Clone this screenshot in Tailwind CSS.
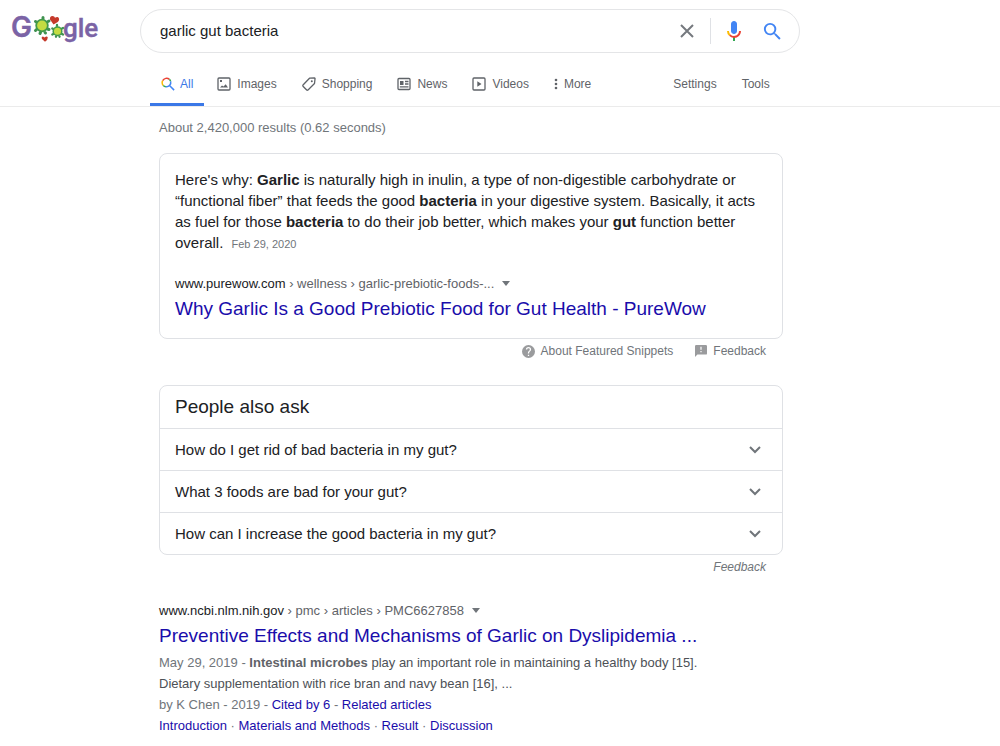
<!DOCTYPE html>
<html lang="en">
<head>
    <meta charset="UTF-8">
    <meta name="viewport" content="width=device-width, initial-scale=1.0">
    <title>garlic gut bacteria - Google Search</title>
    <script src="https://cdn.jsdelivr.net/npm/@tailwindcss/browser@4"></script>
</head>
<body class="bg-white text-[#202124] font-['Liberation_Sans',Arial,sans-serif] text-[13px] overflow-x-hidden">
    <!-- Header -->
    <header class="border-b border-[#ebebeb]">
        <div class="flex pt-[9px]">
            <a href="#" aria-label="Google" class="w-[140px] shrink-0 pl-[10px]">
                <svg class="w-[90px] h-[40px]" viewBox="0 0 90 40">
                    <g fill="#7b63a5" stroke="#7b63a5" stroke-width="0.4">
                        <text x="1" y="28" font-size="28" font-weight="600" font-family="Inter, sans-serif">G</text>
                        <text x="53" y="28" font-size="26" font-weight="500" font-family="Roboto, sans-serif">gle</text>
                    </g>
                    <!-- Turtles -->
                    <g stroke="#3f9150" stroke-width="3" stroke-linecap="round">
                        <path d="M33 9.500v-1M26.500 13l-1-.5M38 12.500l1-.5M26.500 20.500l-1 1M37.500 20l1.500.5M30.500 23.500l-.5 1M35 23.500l.5.5"/>
                        <path stroke-width="2.300" d="M47 17v-1M43.300 20l-1-.5M52 19.500l1-.5M43.300 25l-1 .5M52 25l1 .5M46 27.300v.5M49.500 27.300v.5"/>
                    </g>
                    <circle cx="32" cy="16.500" r="5.800" fill="#c4dc42" stroke="#439a4c" stroke-width="1.800"/>
                    <circle cx="47.500" cy="22.200" r="4.300" fill="#c4dc42" stroke="#439a4c" stroke-width="1.500"/>
                    <g fill="#c5392b">
                        <path d="M43.500 15.500 L40 10.500 Q39.500 7 42.500 7 Q44.500 7 45 8.800 Q48 7 49 9.500 Q49.500 12.500 46.500 13.800Z"/>
                        <path d="M35 32.800 L32 30 Q31 27.500 33 27.500 L34.500 28.500 Q37 26.500 37.800 28.500 Q38 30.500 35 32.800Z"/>
                    </g>
                </svg>
            </a>
            <form class="flex items-center flex-1 max-w-[660px] h-[44px] mr-4 pl-[19px] pr-[15px] border border-[#e4e5e7] rounded-full" onsubmit="return false">
                <input type="text" name="q" aria-label="Search" value="garlic gut bacteria" class="flex-1 min-w-0 text-[15px] outline-none">
                <button type="button" aria-label="Clear" class="w-6 h-6 mr-[11px]">
                    <svg class="w-6 h-6" viewBox="0 0 24 24" fill="none" stroke="#75797e" stroke-width="2"><path d="M6 6l12 12M18 6L6 18"/></svg>
                </button>
                <span class="w-px h-[26px] bg-[#dfe1e5]"></span>
                <button type="button" aria-label="Search by voice" class="w-6 h-6 ml-[11px]">
                    <svg class="w-6 h-6" viewBox="0 0 24 24">
                        <path fill="#4285f4" d="M12 15c1.660 0 3-1.310 3-2.970V5.010C15 3.340 13.660 2 12 2S9 3.340 9 5.010v7.020C9 13.690 10.340 15 12 15z"/>
                        <path fill="#34a853" d="M11 18.080h2V22h-2z"/>
                        <path fill="#fbbc05" d="M7.050 16.870A6.700 6.700 0 0 1 5 12h2c0 1.450.560 2.420 1.470 3.380z"/>
                        <path fill="#ea4335" d="M12 16.930a4.970 4.970 0 0 1-3.540-1.550l-1.410 1.490A6.990 6.990 0 0 0 12 19c3.870 0 6.990-2.920 6.990-7h-1.990c0 2.920-2.240 4.930-5 4.930z"/>
                    </svg>
                </button>
                <button type="submit" aria-label="Google Search" class="w-[23px] h-[23px] ml-[15px]">
                    <svg class="w-[23px] h-[23px]" viewBox="0 0 24 24" fill="#4285f4"><path d="M15.500 14h-.790l-.280-.270A6.470 6.470 0 0 0 16 9.500 6.500 6.500 0 1 0 9.500 16c1.610 0 3.090-.590 4.230-1.570l.270.280v.790l5 4.990L20.490 19l-4.990-5zm-6 0a4.500 4.500 0 1 1 0-9 4.500 4.500 0 0 1 0 9z"/></svg>
                </button>
            </form>
        </div>

        <!-- Tabs -->
        <div class="flex pl-[150px] mt-[9px] text-[12px] text-[#5f6368]">
            <nav class="flex gap-[25px]">
                <a href="#" class="flex items-center h-11 pt-[3px] px-[11px] -mr-3 gap-[5px] border-b-3 border-[#3b78e7] text-[#3b78e7]">
                    <svg class="w-[14px] h-[14px]" viewBox="0 0 16 16" fill="none" stroke-width="1.700">
                        <path stroke="#ea4335" d="M1.900 4.200A5 5 0 0 1 9.600 2.700"/>
                        <path stroke="#fbbc05" d="M1.900 4.200A5 5 0 0 0 2.600 9.700"/>
                        <path stroke="#34a853" d="M9.600 2.700A5 5 0 0 1 11 5M2.600 9.700a5 5 0 0 0 3 1.500"/>
                        <path stroke="#4285f4" d="M11 5A5 5 0 0 1 5.600 11.200M9.700 9.700l5.300 5.300"/>
                    </svg>
                    All
                </a>
                <a href="#" class="flex items-center h-11 pt-[3px] gap-[6px] border-b-3 border-transparent">
                    <svg class="w-[14px] h-[14px]" viewBox="0 0 14 14" fill="none" stroke="currentColor" stroke-width="1.300"><rect x="1" y="1" width="12" height="12" rx="1"/><path fill="currentColor" stroke="none" d="M3 10.500l2-2 1.500 1 2.200-2.200 2.300 3.200zM3 3h2v2H3z"/></svg>
                    Images
                </a>
                <a href="#" class="flex items-center h-11 pt-[3px] gap-[6px] border-b-3 border-transparent">
                    <svg class="w-[14px] h-[14px]" viewBox="0 0 14 14" fill="none" stroke="currentColor" stroke-width="1.300" stroke-linejoin="round"><path d="M7.500 1.200L12.500 1Q13.200 1 13 2L12.500 6.500 6 13Q5.300 13.500 4.700 13L1 9.200Q.600 8.600 1 8z"/><circle cx="9.800" cy="4.200" r="1" fill="currentColor" stroke="none"/></svg>
                    Shopping
                </a>
                <a href="#" class="flex items-center h-11 pt-[3px] gap-[6px] border-b-3 border-transparent">
                    <svg class="w-[14px] h-[14px]" viewBox="0 0 14 14" fill="none" stroke="currentColor" stroke-width="1.300"><rect x="1" y="1.500" width="12" height="11" rx="1"/><path d="M8 4.500h3.500M8 7h3.500M2.800 9.800h8.700"/><path fill="currentColor" stroke="none" d="M3 4h3.500v4H3z"/></svg>
                    News
                </a>
                <a href="#" class="flex items-center h-11 pt-[3px] gap-[6px] border-b-3 border-transparent">
                    <svg class="w-[14px] h-[14px]" viewBox="0 0 14 14" fill="none" stroke="currentColor" stroke-width="1.300"><rect x="1" y="1" width="12" height="12" rx="1"/><path fill="currentColor" stroke="none" d="M5.300 4.200v5.600L9.500 7z"/></svg>
                    Videos
                </a>
                <a href="#" class="flex items-center h-11 pt-[3px] gap-[6px] border-b-3 border-transparent">
                    <svg class="w-[4px] h-[12px]" viewBox="0 0 4 12" fill="currentColor"><circle cx="2" cy="2" r="1.300"/><circle cx="2" cy="6" r="1.300"/><circle cx="2" cy="10" r="1.300"/></svg>
                    More
                </a>
            </nav>
            <div class="flex items-center h-11 pt-[3px] ml-[82px] gap-[25px] border-b-3 border-transparent">
                <a href="#">Settings</a>
                <a href="#">Tools</a>
            </div>
        </div>
    </header>

    <main class="ml-[159px] mr-4 max-w-[624px]">
        <p class="mt-[10px] leading-[21px] text-[#70757a]">About 2,420,000 results (0.62 seconds)</p>

        <!-- Featured snippet -->
        <section class="mt-[15px] px-[15px] pt-[15px] pb-[16px] border border-[#dfe1e5] rounded-lg">
            <p class="text-[15px] leading-[21px]">Here's why: <b>Garlic</b> is naturally high in inulin, a type of non-digestible carbohydrate or “functional fiber” that feeds the good <b>bacteria</b> in your digestive system. Basically, it acts as fuel for those <b>bacteria</b> to do their job better, which makes your <b>gut</b> function better overall. <span class="ml-1 text-[11px] text-[#70757a]">Feb 29, 2020</span></p>
            <div class="flex items-center mt-[18px] leading-[21px] text-[#5f6368]">
                <cite class="not-italic"><span class="text-[#202124]">www.purewow.com</span> › wellness › garlic-prebiotic-foods-...</cite>
                <button type="button" aria-label="More about this result" class="ml-2"><svg class="w-2 h-[5px]" viewBox="0 0 8 5" fill="#70757a"><path d="M0 0h8L4 5z"/></svg></button>
            </div>
            <h3 class="mt-[2px] text-[19px] leading-[26px] text-[#1a0dab]"><a href="#">Why Garlic Is a Good Prebiotic Food for Gut Health - PureWow</a></h3>
        </section>
        <div class="flex justify-end items-center gap-[22px] pr-[17px] pt-[3px] leading-[18px] text-[12px] text-[#70757a]">
            <a href="#" class="flex items-center gap-[6px]">
                <svg class="w-[13px] h-[13px]" viewBox="2 2 20 20" fill="#9a9b9d"><path d="M12 2a10 10 0 1 0 0 20 10 10 0 0 0 0-20zm1 17h-2v-2h2v2zm2.070-7.750l-.900.920C13.450 12.900 13 13.500 13 15h-2v-.500c0-1.100.450-2.100 1.170-2.830l1.240-1.260c.370-.360.590-.860.590-1.410a2 2 0 1 0-4 0H8a4 4 0 1 1 8 0c0 .880-.360 1.680-.930 2.250z"/></svg>
                About Featured Snippets
            </a>
            <a href="#" class="flex items-center gap-[6px]">
                <svg class="w-[12px] h-[12px]" viewBox="2 2 20 20" fill="#9a9b9d"><path d="M20 2H4a2 2 0 0 0-2 2v18l4-4h14a2 2 0 0 0 2-2V4a2 2 0 0 0-2-2zm-7 12h-2v-2h2v2zm0-4h-2V5h2v5z"/></svg>
                Feedback
            </a>
        </div>

        <!-- People also ask -->
        <section class="mt-[25px] border border-[#dfe1e5] rounded-lg divide-y divide-[#dfe1e5] text-[15px]">
            <h2 class="px-[15px] text-[19px] leading-[42px]">People also ask</h2>
            <button type="button" class="flex w-full items-center justify-between pl-[15px] pr-[21px] leading-[41px] text-left">
                How do I get rid of bad bacteria in my gut?
                <svg class="w-3 h-2" viewBox="0 0 12 8" fill="none" stroke="#70757a" stroke-width="2"><path d="M1 1l5 5 5-5"/></svg>
            </button>
            <button type="button" class="flex w-full items-center justify-between pl-[15px] pr-[21px] leading-[41px] text-left">
                What 3 foods are bad for your gut?
                <svg class="w-3 h-2" viewBox="0 0 12 8" fill="none" stroke="#70757a" stroke-width="2"><path d="M1 1l5 5 5-5"/></svg>
            </button>
            <button type="button" class="flex w-full items-center justify-between pl-[15px] pr-[21px] leading-[41px] text-left">
                How can I increase the good bacteria in my gut?
                <svg class="w-3 h-2" viewBox="0 0 12 8" fill="none" stroke="#70757a" stroke-width="2"><path d="M1 1l5 5 5-5"/></svg>
            </button>
        </section>
        <div class="pr-[17px] pt-[3px] text-right leading-[18px] text-[12px] italic text-[#70757a]"><a href="#">Feedback</a></div>

        <!-- Result -->
        <article class="mt-[24px] leading-[21px] text-[#4d5156]">
            <div class="flex items-center text-[#5f6368]">
                <cite class="not-italic"><span class="text-[#202124]">www.ncbi.nlm.nih.gov</span> › pmc › articles › PMC6627858</cite>
                <button type="button" aria-label="More about this result" class="ml-2"><svg class="w-2 h-[5px]" viewBox="0 0 8 5" fill="#70757a"><path d="M0 0h8L4 5z"/></svg></button>
            </div>
            <h3 class="mt-[2px] mb-[3px] text-[19px] leading-[26px] text-[#1a0dab]"><a href="#">Preventive Effects and Mechanisms of Garlic on Dyslipidemia ...</a></h3>
            <p><span class="text-[#70757a]">May 29, 2019 - </span><b class="text-[#5f6368]">Intestinal microbes</b> play an important role in maintaining a healthy body [15].<br>Dietary supplementation with rice bran and navy bean [16], ...</p>
            <p class="text-[#70757a]">by K Chen - 2019 - <a href="#" class="text-[#1a0dab]">Cited by 6</a> - <a href="#" class="text-[#1a0dab]">Related articles</a></p>
            <p class="text-[#70757a]"><a href="#" class="text-[#1a0dab]">Introduction</a> · <a href="#" class="text-[#1a0dab]">Materials and Methods</a> · <a href="#" class="text-[#1a0dab]">Result</a> · <a href="#" class="text-[#1a0dab]">Discussion</a></p>
        </article>
    </main>
</body>
</html>
